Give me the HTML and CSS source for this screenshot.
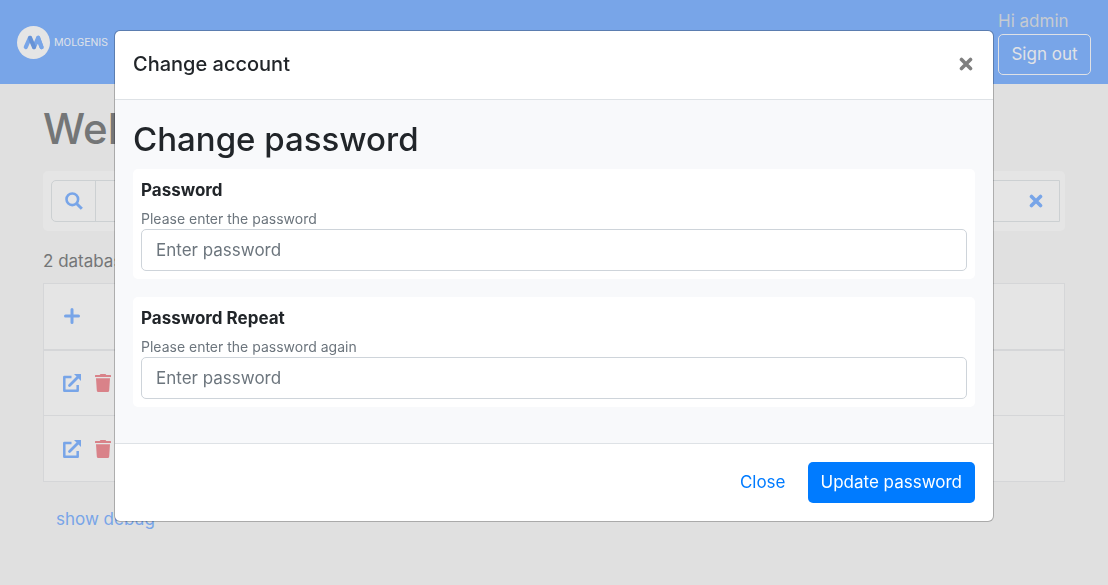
FILE: index.html
```html
<!DOCTYPE html>
<html lang="en">
<head>
<meta charset="utf-8">
<title>Molgenis</title>
<link rel="stylesheet" href="styles.css">
</head>
<body>
<svg class="symbols" aria-hidden="true">
  <symbol id="external" viewBox="0 0 18 18">
    <path d="M8.500 3H1.300v13.700h13.400V11" fill="none" stroke="currentColor" stroke-width="2.500" stroke-linejoin="round"/>
    <path d="M6.500 11.500 14.500 3.500" fill="none" stroke="currentColor" stroke-width="2.800" stroke-linecap="round"/>
    <path d="M11 0h7v7z" fill="currentColor"/>
  </symbol>
  <symbol id="trash" viewBox="0 0 16 18">
    <path d="M.5 1h4.200L5.500 0h5l.8 1h4.200q.5 0 .5.500v1.600H0V1.500Q0 1 .5 1zM1 4.200h14l-.8 12.300q-.1 1.500-1.600 1.500H3.400q-1.500 0-1.600-1.500z" fill="currentColor"/>
  </symbol>
  <symbol id="cross" viewBox="0 0 14 14">
    <path d="M2.500 2.500l9 9M11.500 2.500l-9 9" fill="none" stroke="currentColor" stroke-width="3.600" stroke-linecap="round"/>
  </symbol>
</svg>

<header class="topbar">
  <a class="brand" href="#">
    <svg class="brand-mark" viewBox="0 0 32 32" aria-hidden="true">
      <circle cx="16" cy="16" r="16" fill="#e5e5e5"/>
      <g fill="none" stroke="#78a5e8" stroke-width="4" stroke-linecap="round">
        <path d="M8.500 20.500 12.500 11.500M16.500 20.500l4-9M20.500 11.500l3.300 9"/>
        <path d="M12.700 11.500l3.800 9" stroke="#6692d6"/>
        <path d="M20.500 11.500l3.300 9"/>
      </g>
    </svg>
    <span class="brand-name">MOLGENIS</span>
  </a>
  <div class="account">
    <span class="greeting">Hi admin</span>
    <button class="signout" type="button">Sign out</button>
  </div>
</header>

<main class="page">
  <h1 class="title">Welcome</h1>
  <div class="search">
    <div class="search-group">
      <button class="search-button" type="button" aria-label="Search">
        <svg class="icon" viewBox="0 0 18 18" aria-hidden="true"><g fill="none" stroke="currentColor" stroke-width="2.600"><circle cx="7.300" cy="7.300" r="5.800"/><path d="M11.500 11.500l5.300 5.300" stroke-width="3"/></g></svg>
      </button>
      <input class="search-input" type="text" aria-label="Search databases">
      <button class="clear-button" type="button" aria-label="Clear"><svg class="icon-small"><use href="#cross"/></svg></button>
    </div>
  </div>
  <p class="count">2 databases</p>
  <table class="databases">
    <thead>
      <tr><th><div class="actions"><button class="icon-button" type="button" aria-label="Add database"><svg class="icon" viewBox="0 0 18 18" aria-hidden="true"><path d="M9 2.500v13M2.500 9h13" stroke="currentColor" stroke-width="3" stroke-linecap="round"/></svg></button></div></th></tr>
    </thead>
    <tbody>
      <tr><td><div class="actions"><a class="open" href="#" aria-label="Open database"><svg class="icon"><use href="#external"/></svg></a><button class="icon-button delete" type="button" aria-label="Delete database"><svg class="icon-trash"><use href="#trash"/></svg></button></div></td></tr>
      <tr><td><div class="actions"><a class="open" href="#" aria-label="Open database"><svg class="icon"><use href="#external"/></svg></a><button class="icon-button delete" type="button" aria-label="Delete database"><svg class="icon-trash"><use href="#trash"/></svg></button></div></td></tr>
    </tbody>
  </table>
  <a class="debug" href="#">show debug</a>
</main>

<div class="overlay">
  <form class="modal" role="dialog" aria-labelledby="dialog-title">
    <header class="modal-header">
      <h2 class="modal-title" id="dialog-title">Change account</h2>
      <button class="modal-close" type="button" aria-label="Close dialog"><svg class="icon-small"><use href="#cross"/></svg></button>
    </header>
    <div class="modal-body">
      <h3 class="section-title">Change password</h3>
      <div class="field">
        <label class="label" for="password">Password</label>
        <small class="help" id="password-help">Please enter the password</small>
        <input class="input" id="password" type="password" placeholder="Enter password" aria-describedby="password-help">
      </div>
      <div class="field">
        <label class="label" for="repeat">Password Repeat</label>
        <small class="help" id="repeat-help">Please enter the password again</small>
        <input class="input" id="repeat" type="password" placeholder="Enter password" aria-describedby="repeat-help">
      </div>
    </div>
    <footer class="modal-footer">
      <button class="button link" type="button">Close</button>
      <button class="button primary" type="submit">Update password</button>
    </footer>
  </form>
</div>
</body>
</html>
```
FILE: styles.css
```css
* { box-sizing: border-box; }
body {
  margin: 0;
  background: #e0e0e0;
  color: #212529;
  font-family: Inter, "Liberation Sans", sans-serif;
  font-size: 17px;
  line-height: 27px;
}
button, input { font: inherit; color: inherit; }
button { background: none; border: 0; padding: 0; cursor: pointer; }
h1, h2, h3, p { margin: 0; }
h1, h2, h3 { font-weight: 500; }
a { text-decoration: none; }
svg { display: block; }
.symbols { position: absolute; width: 0; height: 0; }
.icon { width: 18px; height: 18px; }
.icon-small { width: 14px; height: 14px; }
.icon-trash { width: 16px; height: 18px; }

.topbar {
  display: flex;
  justify-content: space-between;
  align-items: center;
  height: 84px;
  padding: 0 17px;
  background: #78a5e8;
}
.brand { display: flex; align-items: center; gap: 4px; }
.brand-mark { width: 33px; height: 33px; }
.brand-name { font-family: "Liberation Sans Narrow", Roboto, sans-serif; font-size: 11px; color: #dde1e8; }
.account { display: flex; flex-direction: column; width: 93px; }
.greeting { line-height: 25px; color: #c6cbd1; }
.signout {
  height: 41px;
  border: 1px solid #dfe1e5;
  border-radius: 5px;
  color: #e0e2e6;
}

.page { padding: 18px 43px; }
.title { font-size: 42px; line-height: 54px; color: #747677; }
.search { margin-top: 15px; padding: 9px 5px 9px 8px; border-radius: 5px; background: #e5e5e5; }
.search-group { display: flex; height: 42px; border: 1px solid #ccd0d2; border-radius: 5px 0 0 5px; color: #78a5e8; }
.search-button { display: grid; place-items: center; width: 44px; border-right: 1px solid #ccd0d2; }
.search-input { flex: 1; min-width: 0; border: 0; background: none; }
.clear-button { display: grid; place-items: center; width: 46px; }
.count { margin: 17px 0 8px; color: #747677; }
.databases { width: 100%; border-collapse: collapse; background: #e5e5e5; }
.databases th, .databases td { height: 66px; padding: 0 19px; border: 1px solid #d5d6d8; }
.databases th { border-bottom-width: 2px; }
.actions { display: flex; align-items: center; gap: 14px; color: #78a5e8; }
.open { color: inherit; }
.delete { color: #d98289; }
.debug { display: inline-block; margin: 24px 13px; color: #78a5e8; }

.overlay { position: fixed; inset: 0; padding: 30px; overflow: auto; }
.modal {
  max-width: 880px;
  margin: 0 auto;
  border: 1px solid rgba(0, 0, 0, .24);
  border-radius: 6px;
  background: #fff;
  background-clip: padding-box;
}
.modal-header {
  display: flex;
  justify-content: space-between;
  align-items: center;
  padding: 20px 20px 21px 18px;
  border-bottom: 1px solid #dee2e6;
}
.modal-title { font-size: 20px; line-height: 27px; }
.modal-close { padding-bottom: 2px; color: #7f7f7f; }
.modal-body { padding: 18px 18px 36px; background: #f8f9fb; }
.section-title { margin-bottom: 8px; font-size: 33px; line-height: 43px; }
.field { padding: 8px; border-radius: 5px; background: #fff; }
.field + .field { margin-top: 18px; }
.label { display: block; font-weight: 700; }
.help { display: block; margin-top: 4px; font-size: 14px; line-height: 21px; color: #6c757d; }
.input {
  display: block;
  width: 100%;
  height: 42px;
  padding: 0 14px;
  border: 1px solid #ced4da;
  border-radius: 5px;
  background: #fff;
}
.input::placeholder { color: #6c757d; opacity: 1; }
.modal-footer {
  display: flex;
  justify-content: flex-end;
  align-items: center;
  gap: 9px;
  padding: 18px;
  border-top: 1px solid #dee2e6;
}
.button { height: 41px; padding: 0 13px; border-radius: 5px; }
.link { color: #007bff; }
.primary { background: #007bff; color: #fff; }
```
